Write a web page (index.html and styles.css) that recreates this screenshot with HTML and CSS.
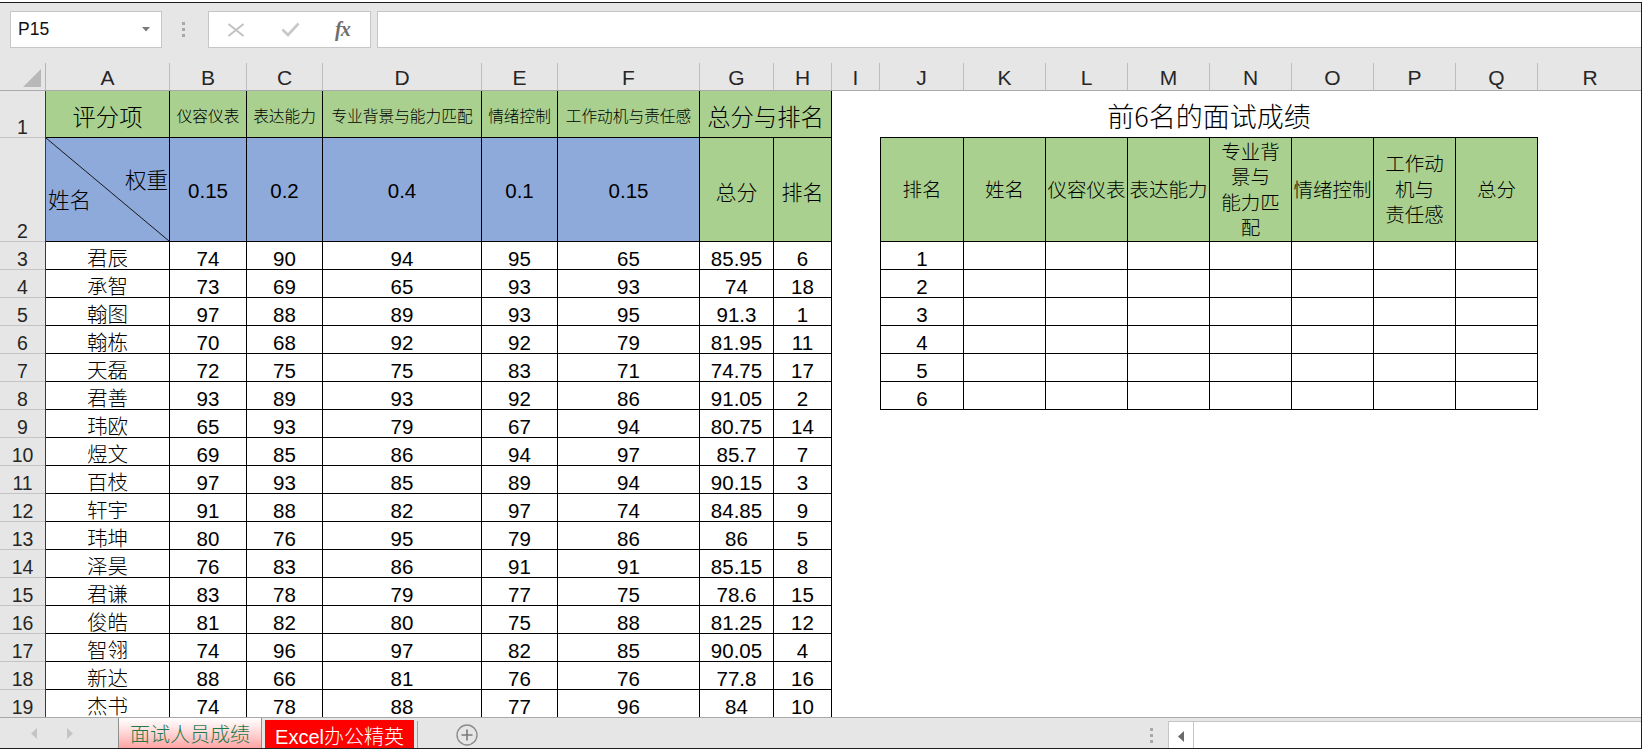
FILE: index.html
```html
<!DOCTYPE html>
<html lang="zh-CN">
<head>
<meta charset="utf-8">
<title>面试人员成绩</title>
<link rel="stylesheet" href="styles.css">
</head>
<body>
<div class="app">
  <div class="toolbar">
    <div class="namebox"><span class="nbtext">P15</span><svg class="caret" width="8" height="5" viewBox="0 0 8 5"><path d="M0 0h8L4 4.5z" fill="#7a7a7a"/></svg></div>
    <div class="grip"><i></i><i></i><i></i></div>
    <div class="fxbox">
      <svg class="ico-x" width="18" height="14" viewBox="0 0 18 14"><path d="M1.5 1L16.5 13M16.5 1L1.5 13" stroke="#c2c2c2" stroke-width="2" fill="none"/></svg>
      <svg class="ico-ok" width="19" height="15" viewBox="0 0 19 15"><path d="M1.5 7.5L7 13L17.5 1.5" stroke="#c8c8c8" stroke-width="2.6" fill="none"/></svg>
      <span class="fx">fx</span>
    </div>
    <div class="formula"></div>
  </div>

  <div class="colhdr">
    <div class="corner"><svg width="20" height="20" viewBox="0 0 20 20"><path d="M19 1V19H1z" fill="#b8b8b8"/></svg></div>
    <div class="ch wa">A</div>
    <div class="ch wb">B</div>
    <div class="ch wc">C</div>
    <div class="ch wd">D</div>
    <div class="ch we">E</div>
    <div class="ch wf">F</div>
    <div class="ch wg">G</div>
    <div class="ch wh">H</div>
    <div class="ch wi">I</div>
    <div class="ch wj">J</div>
    <div class="ch wk">K</div>
    <div class="ch wk">L</div>
    <div class="ch wk">M</div>
    <div class="ch wk">N</div>
    <div class="ch wk">O</div>
    <div class="ch wk">P</div>
    <div class="ch wk">Q</div>
    <div class="ch wr">R</div>
  </div>

  <div class="sheet">
    <div class="rowhdr">
      <div class="rh r1">1</div>
      <div class="rh r2">2</div>
      <div class="rh">3</div>
      <div class="rh">4</div>
      <div class="rh">5</div>
      <div class="rh">6</div>
      <div class="rh">7</div>
      <div class="rh">8</div>
      <div class="rh">9</div>
      <div class="rh">10</div>
      <div class="rh">11</div>
      <div class="rh">12</div>
      <div class="rh">13</div>
      <div class="rh">14</div>
      <div class="rh">15</div>
      <div class="rh">16</div>
      <div class="rh">17</div>
      <div class="rh">18</div>
      <div class="rh">19</div>
    </div>

    <div class="t1">
      <div class="c g h1 big">评分项</div>
      <div class="c g h1">仪容仪表</div>
      <div class="c g h1">表达能力</div>
      <div class="c g h1">专业背景与能力匹配</div>
      <div class="c g h1">情绪控制</div>
      <div class="c g h1">工作动机与责任感</div>
      <div class="c g h1 big span2">总分与排名</div>

      <div class="c bl h2 diag"><div class="dl1">权重</div><div class="dl2">姓名</div></div>
      <div class="c bl h2">0.15</div>
      <div class="c bl h2">0.2</div>
      <div class="c bl h2">0.4</div>
      <div class="c bl h2">0.1</div>
      <div class="c bl h2">0.15</div>
      <div class="c g h2 lbl">总分</div>
      <div class="c g h2 lbl">排名</div>

      <div class="c d">君辰</div><div class="c d">74</div><div class="c d">90</div><div class="c d">94</div><div class="c d">95</div><div class="c d">65</div><div class="c d">85.95</div><div class="c d">6</div>
      <div class="c d">承智</div><div class="c d">73</div><div class="c d">69</div><div class="c d">65</div><div class="c d">93</div><div class="c d">93</div><div class="c d">74</div><div class="c d">18</div>
      <div class="c d">翰图</div><div class="c d">97</div><div class="c d">88</div><div class="c d">89</div><div class="c d">93</div><div class="c d">95</div><div class="c d">91.3</div><div class="c d">1</div>
      <div class="c d">翰栋</div><div class="c d">70</div><div class="c d">68</div><div class="c d">92</div><div class="c d">92</div><div class="c d">79</div><div class="c d">81.95</div><div class="c d">11</div>
      <div class="c d">天磊</div><div class="c d">72</div><div class="c d">75</div><div class="c d">75</div><div class="c d">83</div><div class="c d">71</div><div class="c d">74.75</div><div class="c d">17</div>
      <div class="c d">君善</div><div class="c d">93</div><div class="c d">89</div><div class="c d">93</div><div class="c d">92</div><div class="c d">86</div><div class="c d">91.05</div><div class="c d">2</div>
      <div class="c d">玮欧</div><div class="c d">65</div><div class="c d">93</div><div class="c d">79</div><div class="c d">67</div><div class="c d">94</div><div class="c d">80.75</div><div class="c d">14</div>
      <div class="c d">煜文</div><div class="c d">69</div><div class="c d">85</div><div class="c d">86</div><div class="c d">94</div><div class="c d">97</div><div class="c d">85.7</div><div class="c d">7</div>
      <div class="c d">百枝</div><div class="c d">97</div><div class="c d">93</div><div class="c d">85</div><div class="c d">89</div><div class="c d">94</div><div class="c d">90.15</div><div class="c d">3</div>
      <div class="c d">轩宇</div><div class="c d">91</div><div class="c d">88</div><div class="c d">82</div><div class="c d">97</div><div class="c d">74</div><div class="c d">84.85</div><div class="c d">9</div>
      <div class="c d">玮坤</div><div class="c d">80</div><div class="c d">76</div><div class="c d">95</div><div class="c d">79</div><div class="c d">86</div><div class="c d">86</div><div class="c d">5</div>
      <div class="c d">泽昊</div><div class="c d">76</div><div class="c d">83</div><div class="c d">86</div><div class="c d">91</div><div class="c d">91</div><div class="c d">85.15</div><div class="c d">8</div>
      <div class="c d">君谦</div><div class="c d">83</div><div class="c d">78</div><div class="c d">79</div><div class="c d">77</div><div class="c d">75</div><div class="c d">78.6</div><div class="c d">15</div>
      <div class="c d">俊皓</div><div class="c d">81</div><div class="c d">82</div><div class="c d">80</div><div class="c d">75</div><div class="c d">88</div><div class="c d">81.25</div><div class="c d">12</div>
      <div class="c d">智翎</div><div class="c d">74</div><div class="c d">96</div><div class="c d">97</div><div class="c d">82</div><div class="c d">85</div><div class="c d">90.05</div><div class="c d">4</div>
      <div class="c d">新达</div><div class="c d">88</div><div class="c d">66</div><div class="c d">81</div><div class="c d">76</div><div class="c d">76</div><div class="c d">77.8</div><div class="c d">16</div>
      <div class="c d">杰书</div><div class="c d">74</div><div class="c d">78</div><div class="c d">88</div><div class="c d">77</div><div class="c d">96</div><div class="c d">84</div><div class="c d">10</div>
    </div>

    <div class="gapcol"></div>

    <div class="right">
      <div class="title">前6名的面试成绩</div>
      <div class="t2">
        <div class="c g hd first">排名</div>
        <div class="c g hd">姓名</div>
        <div class="c g hd">仪容仪表</div>
        <div class="c g hd">表达能力</div>
        <div class="c g hd">专业背<br>景与<br>能力匹<br>配</div>
        <div class="c g hd">情绪控制</div>
        <div class="c g hd">工作动<br>机与<br>责任感</div>
        <div class="c g hd">总分</div>

        <div class="c d first">1</div><div class="c"></div><div class="c"></div><div class="c"></div><div class="c"></div><div class="c"></div><div class="c"></div><div class="c"></div>
        <div class="c d first">2</div><div class="c"></div><div class="c"></div><div class="c"></div><div class="c"></div><div class="c"></div><div class="c"></div><div class="c"></div>
        <div class="c d first">3</div><div class="c"></div><div class="c"></div><div class="c"></div><div class="c"></div><div class="c"></div><div class="c"></div><div class="c"></div>
        <div class="c d first">4</div><div class="c"></div><div class="c"></div><div class="c"></div><div class="c"></div><div class="c"></div><div class="c"></div><div class="c"></div>
        <div class="c d first">5</div><div class="c"></div><div class="c"></div><div class="c"></div><div class="c"></div><div class="c"></div><div class="c"></div><div class="c"></div>
        <div class="c d first">6</div><div class="c"></div><div class="c"></div><div class="c"></div><div class="c"></div><div class="c"></div><div class="c"></div><div class="c"></div>
      </div>
    </div>
  </div>

  <div class="tabbar">
    <div class="nav">
      <svg width="7" height="11" viewBox="0 0 7 11"><path d="M6 0V11L0 5.5z" fill="#c4c4c4"/></svg>
      <svg width="7" height="11" viewBox="0 0 7 11"><path d="M1 0V11L7 5.5z" fill="#c4c4c4"/></svg>
    </div>
    <div class="tab1">面试人员成绩</div>
    <div class="tab2">Excel办公精英</div>
    <div class="tsep"></div>
    <div class="plus"><svg width="22" height="22" viewBox="0 0 22 22"><circle cx="11" cy="11" r="10" fill="none" stroke="#8c8c8c" stroke-width="1.4"/><path d="M11 5.5V16.5M5.5 11H16.5" stroke="#7a7a7a" stroke-width="1.6"/></svg></div>
    <div class="spacer"></div>
    <div class="grip2"><i></i><i></i><i></i></div>
    <div class="hscroll">
      <div class="hsl"><svg width="7" height="11" viewBox="0 0 7 11"><path d="M6 0V11L0 5.5z" fill="#6a6a6a"/></svg></div>
      <div class="hst"></div>
    </div>
  </div>
</div>
</body>
</html>
```

FILE: styles.css
```css
* { box-sizing: border-box; }
html, body { margin: 0; padding: 0; background: #fff; }
body {
  font-family: "Liberation Sans", "Noto Sans CJK SC", sans-serif;
  font-weight: 300;
  color: #000;
}

.app {
  width: 1642px;
  height: 747px;
  margin-top: 2px;
  border-top: 1px solid #1e1e1e;
  border-right: 1px solid #1e1e1e;
  border-bottom: 1px solid #1e1e1e;
  background: #e6e6e6;
  display: flex;
  flex-direction: column;
  overflow: hidden;
}

/* toolbar */
.toolbar {
  height: 60px;
  flex: none;
  display: flex;
  align-items: flex-start;
  padding-top: 8px;
}
.namebox {
  margin-left: 10px;
  width: 152px;
  height: 37px;
  background: #fff;
  border: 1px solid #c6c6c6;
  display: flex;
  align-items: center;
  padding-left: 7px;
  padding-right: 11px;
}
.nbtext { font-size: 17.5px; flex: 1; color: #111; }
.grip {
  margin-left: 20px;
  width: 3px;
  height: 37px;
  display: flex;
  flex-direction: column;
  justify-content: center;
  gap: 3px;
}
.grip i, .grip2 i { display: block; width: 3px; height: 3px; background: #a8a8a8; }
.fxbox {
  margin-left: 23px;
  width: 163px;
  height: 37px;
  background: #fff;
  border: 1px solid #c6c6c6;
  display: flex;
  align-items: center;
  padding-left: 18px;
}
.ico-ok { margin-left: 36px; }
.fx {
  margin-left: 35px;
  font-family: "Liberation Serif", serif;
  font-style: italic;
  font-weight: bold;
  font-size: 20px;
  color: #6e6e6e;
  letter-spacing: -1px;
}
.formula {
  margin-left: 6px;
  flex: 1;
  height: 37px;
  background: #fff;
  border: 1px solid #c6c6c6;
  border-right: none;
}

/* column headers */
.colhdr {
  height: 28px;
  flex: none;
  display: flex;
  border-bottom: 1px solid #ababab;
}
.corner {
  width: 46px;
  flex: none;
  border-right: 1px solid #b4b4b4;
  display: flex;
  align-items: flex-end;
  justify-content: flex-end;
  padding: 0 3px 2px 0;
}
.ch {
  flex: none;
  border-right: 1px solid #bebebe;
  font-size: 21px;
  color: #262626;
  display: flex;
  align-items: center;
  justify-content: center;
  padding-top: 2px;
}
.wa { width: 124px; }
.wb { width: 77px; }
.wc { width: 76px; }
.wd { width: 159px; }
.we { width: 76px; }
.wf { width: 142px; }
.wg { width: 74px; }
.wh { width: 58px; }
.wi { width: 48px; }
.wj { width: 84px; }
.wk { width: 82px; }
.wr { width: 104px; border-right: none; }

/* sheet */
.sheet {
  height: 626px;
  flex: none;
  display: flex;
  background: #fff;
  overflow: hidden;
}
.rowhdr {
  width: 46px;
  flex: none;
  background: #e6e6e6;
  border-right: 1px solid #3a3a3a;
}
.rh {
  height: 28px;
  border-bottom: 1px solid #c4c4c4;
  font-size: 19.5px;
  line-height: 16px;
  color: #262626;
  display: flex;
  align-items: flex-end;
  justify-content: center;
  padding-bottom: 2px;
}
.rh.r1 { height: 47px; }
.rh.r2 { height: 104px; }

.t1 {
  flex: none;
  display: grid;
  grid-template-columns: 124px 77px 76px 159px 76px 142px 74px 58px;
  grid-template-rows: 47px 104px repeat(17, 28px);
  align-content: start;
}
.c {
  border-right: 1px solid #000;
  border-bottom: 1px solid #000;
  display: flex;
  align-items: center;
  justify-content: center;
  text-align: center;
  white-space: nowrap;
}
.g { background: #a9d08e; }
.bl { background: #8eaadb; }
.h1 { font-size: 15.7px; padding-top: 3px; }
.big { font-size: 23.3px; }
.span2 { grid-column: span 2; }
.h2 { font-size: 20.5px; padding-top: 3px; }
.lbl { font-size: 21px; }
.d {
  font-size: 20.5px;
  line-height: 16px;
  align-items: flex-end;
  padding-bottom: 2px;
}
.diag {
  display: block;
  padding-top: 33px;
  font-size: 21.5px;
  line-height: 20px;
  background:
    linear-gradient(to top right, transparent calc(50% - 0.8px), #1a1a1a 50%, transparent calc(50% + 0.8px)),
    #8eaadb;
}
.dl1 { text-align: right; padding-right: 1px; }
.dl2 { text-align: left; padding-left: 2px; }

.gapcol { width: 48px; flex: none; }

.right { width: 658px; flex: none; }
.title {
  height: 47px;
  border-bottom: 1px solid #000;
  font-family: "Noto Sans CJK SC", "Liberation Sans", sans-serif;
  font-size: 27px;
  display: flex;
  align-items: center;
  justify-content: center;
  padding-top: 2px;
}
.t2 {
  display: grid;
  grid-template-columns: 84px repeat(7, 82px);
  grid-template-rows: 104px repeat(6, 28px);
}
.first { border-left: 1px solid #000; }
.hd {
  font-size: 19.5px;
  line-height: 25.5px;
  padding-top: 2px;
}

/* sheet tabs */
.tabbar {
  flex: 1;
  display: flex;
  border-top: 1px solid #a9a9a9;
}
.nav {
  width: 118px;
  flex: none;
  display: flex;
  align-items: center;
  padding-left: 31px;
  gap: 28px;
  padding-bottom: 2px;
}
.tab1 {
  width: 144px;
  flex: none;
  border-left: 1px solid #8f8f8f;
  border-right: 1px solid #8f8f8f;
  border-bottom: 3px solid #217346;
  background: linear-gradient(#ffffff 0%, #ffecec 25%, #ffcccc 60%, #ffa3a3 100%);
  color: #1f7a4a;
  font-size: 20px;
  display: flex;
  align-items: center;
  justify-content: center;
  padding-top: 1px;
}
.tab2 {
  width: 149px;
  flex: none;
  margin-left: 3px;
  margin-top: 2px;
  background: #ff0000;
  color: #fff;
  font-size: 20px;
  display: flex;
  align-items: center;
  justify-content: center;
}
.tsep {
  width: 1px;
  flex: none;
  margin: 3px 0 3px 3px;
  background: #a0a0a0;
}
.plus {
  margin-left: 38px;
  display: flex;
  align-items: center;
  padding-top: 1px;
}
.spacer { flex: 1; }
.grip2 {
  width: 4px;
  flex: none;
  display: flex;
  flex-direction: column;
  justify-content: center;
  gap: 3px;
  margin-right: 14px;
  padding-top: 2px;
}
.hscroll {
  width: 473px;
  flex: none;
  margin-top: 3px;
  background: #fff;
  border: 1px solid #c6c6c6;
  border-right: none;
  display: flex;
}
.hsl {
  width: 25px;
  border-right: 1px solid #c6c6c6;
  display: flex;
  align-items: center;
  justify-content: center;
}
.hst { flex: 1; }
```
